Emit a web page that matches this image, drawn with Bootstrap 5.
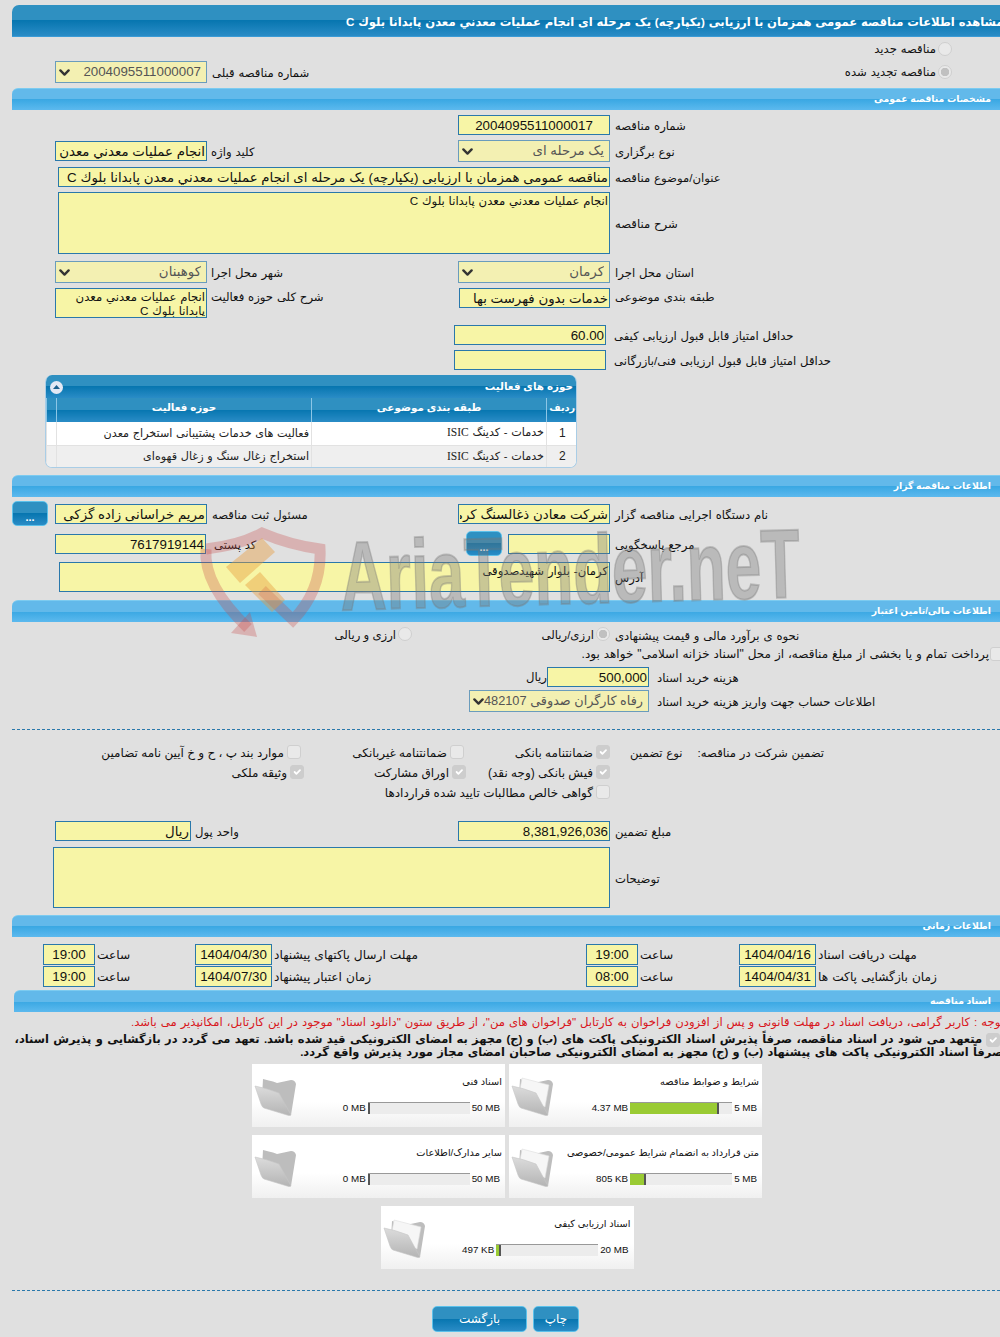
<!DOCTYPE html>
<html lang="fa">
<head>
<meta charset="utf-8">
<title>مشاهده اطلاعات مناقصه</title>
<link href="https://cdn.jsdelivr.net/npm/bootstrap@5.3.0/dist/css/bootstrap.min.css" rel="stylesheet">
<style>
html,body{margin:0;background:#e0e0e0;}
body{font-family:"Liberation Sans","DejaVu Sans",sans-serif;font-size:11.67px;color:#111;line-height:1.2;word-spacing:.6px;}
.pg{position:relative;width:1000px;height:1337px;overflow:hidden;padding:5px 0 0 12px;}
.tbar{height:32px;width:1000px;display:flex;align-items:center;padding:3px 0 0 334px;border-radius:7px 0 0 0;color:#fff;font-weight:bold;font-size:11.6px;word-spacing:.6px;white-space:nowrap;background:linear-gradient(#2f90c1 0,#2f90c1 50%,#0776b0 50%,#2a8cc6 100%);border-bottom:1px solid #3a9bd6;}
.sbar{height:22px;width:988px;display:flex;align-items:center;justify-content:flex-end;padding:1px 9px 0 0;border-radius:6px 0 0 0;color:#fff;font-weight:bold;font-size:9.33px;word-spacing:0;background:linear-gradient(#62b9ea 0,#62b9ea 50%,#3aa8e3 50%,#5cb9ee 100%);border-top:1px solid #7ccbf0;}
.sbar-docs{width:986px;margin-left:2px;}
.frow{display:flex;align-items:flex-start;}
.lc{width:442px;padding-left:43px;display:flex;align-items:flex-start;flex:none;}
.rc{display:flex;align-items:flex-start;}
.fg{display:flex;align-items:center;}
.fg-top{align-items:flex-start;}
.fg-top .lb{line-height:14px;}
.lb{margin-left:5px;white-space:nowrap;padding-top:2px;}
.lb-l{margin-left:4px;}
.h23{height:23px}.h28{height:28px}.h27{height:27px}.h26{height:26px}.h68{height:68px}.h37{height:37px}.h33{height:33px}.h30{height:30px}.h40{height:40px}.h22{height:22px}.h24{height:24px}.h20{height:20px}.h29{height:29px}.h39{height:39px}
.t1{margin-top:1px}.t2{margin-top:2px}.t3{margin-top:3px}.t4{margin-top:4px}.t5{margin-top:5px}.t7{margin-top:7px}
.p2{padding-top:2px}.p3{padding-top:3px}.p5{padding-top:5px}.p7{padding-top:7px}
.form-control.fd,.form-select.fd{border:1px solid #2a78ab;border-radius:0;background-color:#f7f5a6;color:#111;font-size:13.33px;line-height:1.2;padding:0 1px;height:20px;min-height:0;box-shadow:none;font-family:"Liberation Sans","DejaVu Sans",sans-serif;}
textarea.form-control.fd{resize:none;font-size:11.67px;padding:1px;overflow:hidden;line-height:14px;word-spacing:.6px;}
.form-select.fd{height:22px;background-color:#f3f0b2;border-color:#6a9cbc;color:#555;padding:0 5px 0 14px;background-position:left 3px center;background-size:11px 11px;opacity:1;background-image:url("data:image/svg+xml,%3csvg xmlns='http://www.w3.org/2000/svg' viewBox='0 0 16 16'%3e%3cpath fill='none' stroke='%23333' stroke-linecap='round' stroke-linejoin='round' stroke-width='3.4' d='m2 5 6 6 6-6'/%3e%3c/svg%3e");}
.form-select.fd.w180{padding-left:14px;font-size:12.8px;}
.w152{width:152px}.w151{width:151px}.w136{width:136px}.w102{width:102px}.w180{width:180px}.w552{width:552px}.w557{width:557px}.w551{width:551px}.w52{width:52px}.w77{width:77px}
.h62{height:62px!important}.h30x{height:30px!important}.h61{height:61px!important}
.ml1{margin-left:1px}.ml4{margin-left:4px}.ml6{margin-left:6px}.ml12{margin-left:12px}.ml41{margin-left:41px}.ml46{margin-left:46px}.ml47{margin-left:47px}
.rbtn.form-check-input,.cbx.form-check-input{margin:0;flex:none;width:14px;height:14px;opacity:1;float:none;background-color:#e9e9e9;border:1px solid #cfcfcf;}
.rbtn.form-check-input:checked{background-color:#e9e9e9;border-color:#cfcfcf;background-image:radial-gradient(circle,#c0c0c0 0,#c0c0c0 4px,transparent 4.5px);}
.cbx.form-check-input{border-radius:3px;}
.cbx.form-check-input:checked{background-color:#cdcdcd;border-color:#cdcdcd;}
.rtl-line{display:flex;align-items:center;gap:2px;white-space:nowrap;}
.rad-first{width:988px;padding-right:48px;}
.prev-r{flex:1;padding-right:48px;}
.ck-clip{width:988px;margin-left:4px;gap:1px;flex:none;font-size:12px;}
.tbl-wrap{margin-left:33px;width:532px;height:93px;border:1px solid #a9cde6;border-top:0;border-radius:7px;overflow:hidden;background:#fff;}
.tbl-head{height:23px;display:flex;align-items:center;justify-content:space-between;padding:1px 3px 0 4px;color:#fff;font-weight:bold;font-size:10.4px;word-spacing:0;background:linear-gradient(#2f90c1 0,#2f90c1 50%,#0776b0 50%,#2a8cc6 100%);}
.coll{width:13px;height:13px;border-radius:50%;background:#e4e8f4;display:flex;align-items:center;justify-content:center;}
.tbl-wrap .table{margin:0;table-layout:fixed;width:531px;font-size:11.2px;--bs-table-bg:transparent;}
.tbl-wrap .table th{height:24px;padding:0 0 4px;text-align:center;color:#fff;font-weight:bold;font-size:10.4px;word-spacing:0;border:0;border-left:1px solid #8cc6e6;background:linear-gradient(#2f90c1 0,#2f90c1 50%,#0776b0 50%,#2a8cc6 100%);vertical-align:middle;white-space:nowrap;}
.tbl-wrap .table th.thr{font-size:9.8px;}
.tbl-wrap .table td{height:23px;padding:0 2px;border:0;border-left:1px solid #e2e2e2;border-bottom:1px solid #e2e2e2;vertical-align:middle;text-align:right;color:#222;}
.tbl-wrap .table td.rn{text-align:center;font-size:12px;}
.tbl-wrap .table tr.alt td{background:#efefef;}
.isic{font-family:"Liberation Serif",serif;font-size:11.5px;}
.c0{width:10px}.c1{width:255px}.c2{width:235px}.c3{width:31px}
.mb7{margin-bottom:7px}
.bt.btn{background:linear-gradient(#2f90c1 0,#2f90c1 50%,#0776b0 50%,#2a8cc6 100%);border:1px solid #5cc1ea;border-radius:5px;color:#fff;font-weight:normal;padding:0;font-size:12px;line-height:1;}
.bt.bt-dots{width:36px;height:25px;padding-top:7px;font-weight:bold;font-size:11px;}
.sp7{width:7px;flex:none}
.lc-btn{padding-left:0;}
.dash{border-top:1px dashed #2a78ab;height:0;width:988px;}
.gap17{height:17px}.gap12{height:12px}.gap15{height:15px}.gap21{height:21px}
.g-pay{padding-left:516px;}.g-sel{padding-left:457px;}
.ry{width:19px;flex:none;text-align:left;}
.gw{width:598px;flex:none;justify-content:flex-start;display:flex;}
.gc1{width:146px}.gc2{width:163px}.gc1b{width:144px}.gc2b{width:162px}.rc198{width:198px}
.cell{display:flex;align-items:center;gap:3px;white-space:nowrap;flex:none;height:20px;font-size:12px;word-spacing:0;}
.cell span{padding-top:2px;}
.cell-r{height:14px;font-size:11.67px;gap:2px;}
.ml20{margin-left:20px}.ml15{margin-left:15px}
.lb.lbg{line-height:18px;}
.tg{display:flex;align-items:center;flex:none;}
.tg1{margin-left:31px;width:152px}.tg2{width:391px}.tg3{width:153px}
.tg .lb{margin-left:2px;font-size:12.2px;}
.tg .form-control.fd{text-align:center;height:21px;}
.nt-red{color:#d8161c;font-size:11.67px;width:990px;margin-left:2px;overflow:hidden;white-space:nowrap;height:14px;line-height:14px;word-spacing:.7px;}
.nt-b{font-weight:bold;font-size:11.45px;white-space:nowrap;line-height:13px;height:13px;word-spacing:1.15px;}
.nt-b1{width:988px;display:flex;align-items:center;gap:4px;margin-top:4px;}
.nt-b2{margin-left:3px;width:988px;}
.docs{width:510px;margin:5px 0 0 240px;display:flex;flex-wrap:wrap;gap:8px 4px;justify-content:center;}
.dcard{width:253px;height:63px;display:flex;background:linear-gradient(#fff 0,#fff 60%,#f0f0f0 100%);font-size:9.8px;padding:0 3px 0 2px;flex:none;word-spacing:0;}
.dico{width:44px;height:42px;margin-top:13px;flex:none;}
.dbody{flex:1;display:flex;flex-direction:column;}
.dname{height:38px;padding-top:12px;text-align:right;white-space:nowrap;}
.dprog{display:flex;align-items:center;justify-content:flex-end;gap:2px;padding-right:2px;font-size:9.8px;}
.dprog .progress{width:102px;height:12px;border-radius:0;background:#ececec;border-top:1px solid #999;flex:none;}
.dprog .progress-bar{background:#9acb34;border-right:2px solid #555;}
.bts{display:flex;gap:6px;margin:0 0 0 420px;}
.bt.bt-back{width:95px;height:26px;}.bt.bt-print{width:46px;height:26px;}
.wm{position:absolute;left:190px;top:515px;pointer-events:none;}
</style>
</head>
<body>
<svg width="0" height="0" class="d-block position-absolute">
<defs>
<linearGradient id="fg1" x1="0" y1="0" x2="0" y2="1"><stop offset="0" stop-color="#dcdcdc"/><stop offset="1" stop-color="#b4b4b4"/></linearGradient>
<symbol id="folderE" viewBox="0 0 44 42">
<path d="M9 2 Q22 5 23 6 L37 3 Q41 3 42 7 L37 38 Q35 38 33 36 L8 20Z" fill="#bdbdbd"/>
<path d="M1 9 Q12 11 25 16 L37 38 Q36 39 33 38 L10 31 Q8 30 7 27Z" fill="url(#fg1)" stroke="#c6c6c6" stroke-width=".6"/>
</symbol>
<symbol id="folderF" viewBox="0 0 44 42">
<path d="M9 2 Q22 5 23 6 L37 3 Q41 3 42 7 L37 38 Q35 38 33 36 L8 20Z" fill="#bdbdbd"/>
<path d="M11 1 L38 8 L34 30 L8 18Z" fill="#f6f6f6" stroke="#dedede" stroke-width=".6"/>
<path d="M1 9 Q12 11 25 16 L37 38 Q36 39 33 38 L10 31 Q8 30 7 27Z" fill="url(#fg1)" stroke="#c6c6c6" stroke-width=".6"/>
</symbol>
</defs>
</svg>
<div class="pg">
  <div class="tbar"><span dir="rtl">مشاهده اطلاعات مناقصه عمومی همزمان با ارزیابی (یکپارچه) یک مرحله ای انجام عملیات معدني معدن پابدانا بلوك C</span></div>

  <div class="frow h23"><div class="rtl-line rad-first t5" dir="rtl"><input class="form-check-input rbtn" type="radio" disabled><span>مناقصه جدید</span></div></div>
  <div class="frow h28">
    <div class="lc t1"><div class="fg"><select class="form-select fd w152" dir="rtl" disabled><option>2004095511000007</option></select><span class="lb">شماره مناقصه قبلی</span></div></div>
    <div class="rtl-line t5 prev-r" dir="rtl"><input class="form-check-input rbtn" type="radio" checked disabled><span>مناقصه تجدید شده</span></div>
  </div>

  <div class="sbar"><span dir="rtl">مشخصات مناقصه عمومی</span></div>

  <div class="frow h27"><div class="lc"></div><div class="rc t5"><div class="fg ml4"><input class="form-control fd w152 text-center" value="2004095511000017" readonly><span class="lb">شماره مناقصه</span></div></div></div>
  <div class="frow h27">
    <div class="lc t4"><div class="fg"><input class="form-control fd w152" dir="rtl" value="انجام عملیات معدني معدن" readonly><span class="lb lb-l">کلید واژه</span></div></div>
    <div class="rc t3"><div class="fg ml4"><select class="form-select fd w152" dir="rtl" disabled><option>یک مرحله ای</option></select><span class="lb">نوع برگزاری</span></div></div>
  </div>
  <div class="frow h26"><div class="fg t3 ml46"><input class="form-control fd w552" dir="rtl" value="مناقصه عمومی همزمان با ارزیابی (یکپارچه) یک مرحله ای انجام عملیات معدني معدن پابدانا بلوك C" readonly><span class="lb">عنوان/موضوع مناقصه</span></div></div>
  <div class="frow h68"><div class="fg t2 ml46"><textarea class="form-control fd w552 h62" dir="rtl" readonly>انجام عملیات معدني معدن پابدانا بلوك C</textarea><span class="lb">شرح مناقصه</span></div></div>
  <div class="frow h27">
    <div class="lc t3"><div class="fg"><select class="form-select fd w152" dir="rtl" disabled><option>کوهبنان</option></select><span class="lb lb-l">شهر محل اجرا</span></div></div>
    <div class="rc t3"><div class="fg ml4"><select class="form-select fd w152" dir="rtl" disabled><option>کرمان</option></select><span class="lb">استان محل اجرا</span></div></div>
  </div>
  <div class="frow h37">
    <div class="lc t3"><div class="fg fg-top"><textarea class="form-control fd w152 h30x" dir="rtl" readonly>انجام عملیات معدني معدن پابدانا بلوك C</textarea><span class="lb lb-l">شرح کلی حوزه فعالیت</span></div></div>
    <div class="rc t3"><div class="fg fg-top ml4"><input class="form-control fd w151 ml1" dir="rtl" value="خدمات بدون فهرست بها" readonly><span class="lb">طبقه بندی موضوعی</span></div></div>
  </div>
  <div class="frow h26"><div class="lc"></div><div class="rc t3"><div class="fg"><input class="form-control fd w152 text-end" value="60.00" readonly><span class="lb ms-2">حداقل امتیاز قابل قبول ارزیابی کیفی</span></div></div></div>
  <div class="frow h27"><div class="lc"></div><div class="rc t2"><div class="fg"><input class="form-control fd w152" readonly><span class="lb ms-2">حداقل امتیاز قابل قبول ارزیابی فنی/بازرگانی</span></div></div></div>

  <div class="tbl-wrap mb7">
    <div class="tbl-head"><span class="coll"><svg width="9" height="6" viewBox="0 0 9 6"><path d="M1 5 4.5 1 8 5Z" fill="#1d5f8c"/></svg></span><span dir="rtl">حوزه های فعالیت</span></div>
    <table class="table">
      <colgroup><col class="c0"><col class="c1"><col class="c2"><col class="c3"></colgroup>
      <thead><tr><th></th><th dir="rtl">حوزه فعالیت</th><th dir="rtl">طبقه بندی موضوعی</th><th class="thr" dir="rtl">ردیف</th></tr></thead>
      <tbody>
        <tr><td></td><td dir="rtl">فعالیت های خدمات پشتیبانی استخراج معدن</td><td dir="rtl">خدمات - کدینگ <span class="isic">ISIC</span></td><td class="rn">1</td></tr>
        <tr class="alt"><td></td><td dir="rtl">استخراج زغال سنگ و  زغال قهوه‌ای</td><td dir="rtl">خدمات - کدینگ <span class="isic">ISIC</span></td><td class="rn">2</td></tr>
      </tbody>
    </table>
  </div>

  <div class="sbar"><span dir="rtl">اطلاعات مناقصه گزار</span></div>

  <div class="frow h33">
    <div class="lc lc-btn t4"><button class="btn bt bt-dots" type="button">...</button><div class="sp7"></div><div class="fg t3"><input class="form-control fd w152" dir="rtl" value="مریم خراسانی زاده گزکی" readonly><span class="lb">مسئول ثبت مناقصه</span></div></div>
    <div class="rc t7"><div class="fg ml4"><input class="form-control fd w152" dir="rtl" value="شرکت معادن ذغالسنگ کرمان" readonly><span class="lb">نام دستگاه اجرایی مناقصه گزار</span></div></div>
  </div>
  <div class="frow h30">
    <div class="lc t4"><div class="fg"><input class="form-control fd w151 text-end" value="7617919144" readonly><span class="lb ms-2">کد پستی</span></div></div>
    <div class="rc t1"><div class="fg ml12"><button class="btn bt bt-dots" type="button">...</button><input class="form-control fd w102 ml6" readonly><span class="lb">مرجع پاسخگویی</span></div></div>
  </div>
  <div class="frow h40"><div class="fg t2 ml47"><textarea class="form-control fd w551 h30x" dir="rtl" readonly>کرمان- بلوار شهیدصدوقی</textarea><span class="lb">آدرس</span></div></div>

  <div class="sbar"><span dir="rtl">اطلاعات مالی/تامین اعتبار</span></div>

  <div class="frow h22 p5">
    <div class="gw" dir="rtl"><div class="cell cell-r rc198"><input class="form-check-input rbtn" type="radio" checked disabled><span>ارزی/ریالی</span></div><div class="cell cell-r"><input class="form-check-input rbtn" type="radio" disabled><span>ارزی و ریالی</span></div></div>
    <span class="lb">نحوه ی برآورد مالی و قیمت پیشنهادی</span>
  </div>
  <div class="frow h20 p3"><div class="rtl-line ck-clip" dir="rtl"><input class="form-check-input cbx" type="checkbox" disabled><span>پرداخت تمام و یا بخشی از مبلغ مناقصه، از محل "اسناد خزانه اسلامی" خواهد بود.</span></div></div>
  <div class="frow h24 p3"><div class="fg g-pay"><span class="ry" dir="rtl">ریال</span><input class="form-control fd w102 text-end" value="500,000" readonly><span class="lb ms-2">هزینه خرید اسناد</span></div></div>
  <div class="frow h24 p2"><div class="fg g-sel"><select class="form-select fd w180" dir="rtl" disabled><option>رفاه کارگران صدوقی 482107</option></select><span class="lb ms-2">اطلاعات حساب جهت واریز هزینه خرید اسناد</span></div></div>
  <div class="gap17"></div>
  <div class="dash"></div>
  <div class="gap12"></div>

  <div class="frow h20">
    <div class="gw" dir="rtl"><div class="cell gc1"><input class="form-check-input cbx" type="checkbox" checked disabled><span>ضمانتنامه بانکی</span></div><div class="cell gc2"><input class="form-check-input cbx" type="checkbox" disabled><span>ضمانتنامه غیربانکی</span></div><div class="cell"><input class="form-check-input cbx" type="checkbox" disabled><span>موارد بند پ ، ح و خ آیین نامه تضامین</span></div></div>
    <span class="lb lbg ml20" dir="rtl">نوع تضمین</span><span class="lb lbg ml15" dir="rtl">تضمین شرکت در مناقصه:</span>
  </div>
  <div class="frow h20">
    <div class="gw" dir="rtl"><div class="cell gc1b"><input class="form-check-input cbx" type="checkbox" checked disabled><span>فیش بانکی (وجه نقد)</span></div><div class="cell gc2b"><input class="form-check-input cbx" type="checkbox" checked disabled><span>اوراق مشارکت</span></div><div class="cell"><input class="form-check-input cbx" type="checkbox" checked disabled><span>وثیقه ملکی</span></div></div>
  </div>
  <div class="frow h39">
    <div class="gw" dir="rtl"><div class="cell"><input class="form-check-input cbx" type="checkbox" disabled><span>گواهی خالص مطالبات تایید شده قراردادها</span></div></div>
  </div>

  <div class="frow h26">
    <div class="lc"><div class="fg"><input class="form-control fd w136" dir="rtl" value="ریال" readonly><span class="lb lb-l">واحد پول</span></div></div>
    <div class="rc"><div class="fg ml4"><input class="form-control fd w152 text-end" value="8,381,926,036" readonly><span class="lb">مبلغ تضمین</span></div></div>
  </div>
  <div class="frow h68"><div class="fg ml41"><textarea class="form-control fd w557 h61" dir="rtl" readonly></textarea><span class="lb">توضیحات</span></div></div>

  <div class="sbar"><span dir="rtl">اطلاعات زمانی</span></div>

  <div class="frow h29 p7">
    <div class="tg tg1"><input class="form-control fd w52" value="19:00" readonly><span class="lb" dir="rtl">ساعت</span></div>
    <div class="tg tg2"><input class="form-control fd w77" value="1404/04/30" readonly><span class="lb" dir="rtl">مهلت ارسال پاکتهای پیشنهاد</span></div>
    <div class="tg tg3"><input class="form-control fd w52" value="19:00" readonly><span class="lb" dir="rtl">ساعت</span></div>
    <div class="tg"><input class="form-control fd w77" value="1404/04/16" readonly><span class="lb" dir="rtl">مهلت دریافت اسناد</span></div>
  </div>
  <div class="frow h24">
    <div class="tg tg1"><input class="form-control fd w52" value="19:00" readonly><span class="lb" dir="rtl">ساعت</span></div>
    <div class="tg tg2"><input class="form-control fd w77" value="1404/07/30" readonly><span class="lb" dir="rtl">زمان اعتبار پیشنهاد</span></div>
    <div class="tg tg3"><input class="form-control fd w52" value="08:00" readonly><span class="lb" dir="rtl">ساعت</span></div>
    <div class="tg"><input class="form-control fd w77" value="1404/04/31" readonly><span class="lb" dir="rtl">زمان بازگشایی پاکت ها</span></div>
  </div>

  <div class="sbar sbar-docs"><span dir="rtl">اسناد مناقصه</span></div>

  <div class="nt-red t3" dir="rtl">توجه : کاربر گرامی، دریافت اسناد در مهلت قانونی و پس از افزودن فراخوان به کارتابل "فراخوان های من"، از طریق ستون "دانلود اسناد" موجود در این کارتابل، امکانپذیر می باشد.</div>
  <div class="nt-b1 nt-b" dir="rtl"><input class="form-check-input cbx" type="checkbox" checked disabled><span>متعهد می شود در اسناد مناقصه، صرفاً پذیرش اسناد الکترونیکی پاکت های (ب) و (ج) مجهز به امضای الکترونیکی قید شده باشد. تعهد می گردد در بازگشایی و پذیرش اسناد،</span></div>
  <div class="nt-b nt-b2" dir="rtl">صرفاً اسناد الکترونیکی پاکت های پیشنهاد (ب) و (ج) مجهز به امضای الکترونیکی صاحبان امضای مجاز مورد پذیرش واقع گردد.</div>

  <div class="docs" dir="rtl">
    <div class="dcard"><div class="dbody"><div class="dname">شرایط و ضوابط مناقصه</div><div class="dprog" dir="ltr"><span>4.37 MB</span><div class="progress"><div class="progress-bar" style="width:87.4%"></div></div><span>5 MB</span></div></div><svg class="dico"><use href="#folderF"/></svg></div>
    <div class="dcard"><div class="dbody"><div class="dname">اسناد فنی</div><div class="dprog" dir="ltr"><span>0 MB</span><div class="progress"><div class="progress-bar" style="width:0%"></div></div><span>50 MB</span></div></div><svg class="dico"><use href="#folderE"/></svg></div>
    <div class="dcard"><div class="dbody"><div class="dname">متن قرارداد به انضمام شرایط عمومی/خصوصی</div><div class="dprog" dir="ltr"><span>805 KB</span><div class="progress"><div class="progress-bar" style="width:16%"></div></div><span>5 MB</span></div></div><svg class="dico"><use href="#folderF"/></svg></div>
    <div class="dcard"><div class="dbody"><div class="dname">سایر مدارک/اطلاعات</div><div class="dprog" dir="ltr"><span>0 MB</span><div class="progress"><div class="progress-bar" style="width:0%"></div></div><span>50 MB</span></div></div><svg class="dico"><use href="#folderE"/></svg></div>
    <div class="dcard"><div class="dbody"><div class="dname">اسناد ارزیابی کیفی</div><div class="dprog" dir="ltr"><span>497 KB</span><div class="progress"><div class="progress-bar" style="width:5%"></div></div><span>20 MB</span></div></div><svg class="dico"><use href="#folderF"/></svg></div>
  </div>

  <div class="gap21"></div>
  <div class="dash"></div>
  <div class="gap15"></div>
  <div class="bts"><button class="btn bt bt-back" type="button" dir="rtl">بازگشت</button><button class="btn bt bt-print" type="button" dir="rtl">چاپ</button></div>

  <svg class="wm" width="620" height="130" viewBox="190 515 620 130">
    <g fill="none" stroke="#c64a4a" stroke-opacity=".3" stroke-width="11">
      <path d="M206 549 Q240 545 262 533 Q290 545 320 549 Q322 590 293 620 L262 590"/>
      <path d="M206 549 Q203 585 248 628"/>
    </g>
    <path d="M231 633 257 637 250 612Z" fill="#c64a4a" fill-opacity=".3"/>
    <g fill="#e89a3c" fill-opacity=".42">
      <path d="M226 567 262 538 275 552 240 583Z"/>
      <path d="M245 585 260 572 285 600 272 612Z"/>
    </g>
    <g transform="rotate(-1.6 560 570)"><text x="340" y="604" font-family="Liberation Sans,sans-serif" font-weight="bold" font-size="98" fill="#777" fill-opacity=".36" stroke="#777" stroke-opacity=".36" stroke-width="2" textLength="460" lengthAdjust="spacingAndGlyphs">AriaTender.neT</text></g>
  </svg>
</div>
<script src="https://cdn.jsdelivr.net/npm/bootstrap@5.3.0/dist/js/bootstrap.bundle.min.js"></script>
</body>
</html>
